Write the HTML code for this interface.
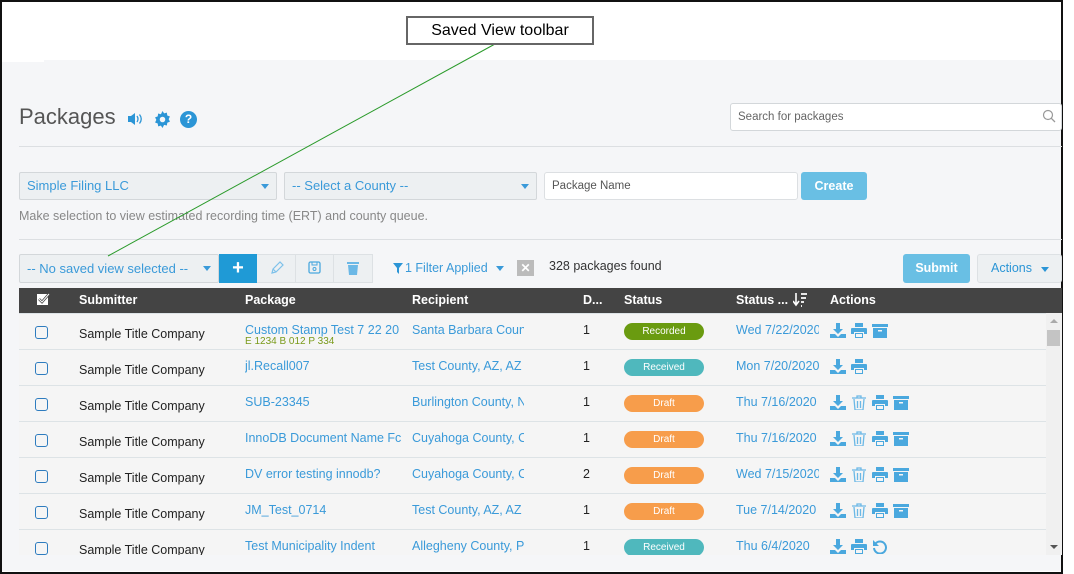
<!DOCTYPE html>
<html><head><style>
*{box-sizing:border-box;margin:0;padding:0}
body{width:1074px;height:574px;background:#fff;position:relative;overflow:hidden;font-family:"Liberation Sans",sans-serif;font-size:12.5px}
.a{position:absolute}
.blue{color:#3a9ad9}
.sel{position:absolute;background:#edf0f2;border:1px solid #d3d7da;border-radius:2px;color:#3a9ad9;font-size:13px;padding-left:7px;line-height:26px}
.car{position:absolute;right:7px;top:11px;width:0;height:0;border-left:4px solid transparent;border-right:4px solid transparent;border-top:5px solid #3a9ad9}
.row{position:absolute;left:19px;width:1027px;height:36px;border-top:1px solid #dde3e6;background:#f5f5f5}
.row span{position:absolute}
.cb{left:16px;top:12px;width:13px;height:13px;border:1.5px solid #2e7cbf;border-radius:3px}
.sub{left:60px;top:13px;color:#222;font-size:12.5px}
.pk{left:226px;top:9px;color:#3a9ad9;font-size:12.5px;width:158px;white-space:nowrap;overflow:hidden}
.rc{left:393px;top:9px;color:#3a9ad9;width:112px;white-space:nowrap;overflow:hidden}
.d{left:564px;top:9px;color:#222}
.pill{left:605px;top:9px;width:80px;height:17px;border-radius:9px;color:#fff;font-size:10px;text-align:center;line-height:17px}
.dt{left:717px;top:9px;color:#3a9ad9;width:83px;white-space:nowrap;overflow:hidden}
.ic{left:811px;top:9px;display:flex;gap:5px}
th{}
.h{position:absolute;top:5px;color:#fff;font-weight:bold;font-size:12.5px}
</style></head><body>
<svg width="0" height="0" style="position:absolute"><defs>
<g id="dl"><path d="M6 0h4v6h3l-5 5-5-5h3z M0 11h5l3 3 3-3h5v4H0z" fill="#4aa8de"/></g>
<g id="pr"><path d="M4 0h8v4H4z M1 5h14a1 1 0 0 1 1 1v5h-3v-2H3v2H0V6a1 1 0 0 1 1-1z M4 10h8v5H4z" fill="#4aa8de"/><rect x="5" y="11" width="6" height="3" fill="#f5f5f5"/></g>
<g id="ar"><rect x="0" y="1" width="16" height="3" fill="#4aa8de"/><rect x="1" y="5" width="14" height="10" fill="#4aa8de"/><rect x="6" y="7" width="4" height="1.5" fill="#f5f5f5"/></g>
<g id="tr"><path d="M1 3h14 M6 3V1h4v2 M3 4l1 11h8l1-11 M6.5 6v7 M9.5 6v7" stroke="#6bb8e6" stroke-width="1.3" fill="none"/></g>
<g id="ud"><path d="M3.5 4.5A6 6 0 1 1 2 9" stroke="#4aa8de" stroke-width="2" fill="none"/><path d="M1 1v6h6z" fill="#4aa8de"/></g>
</defs></svg>
<div class="a" style="left:0;top:0;width:1063px;height:574px;border:2px solid #111;border-right-width:2px"></div>
<div class="a" style="left:2px;top:60px;width:1059px;height:511px;background:#f5f6f8"></div>
<div class="a" style="left:2px;top:58px;width:42px;height:4px;background:#fff"></div>

<div class="a" style="left:19px;top:104px;font-size:22px;color:#555">Packages</div>
<svg class="a" style="left:128px;top:112px" width="16" height="14"><path d="M0 4h3l4-3v12l-4-3H0z" fill="#2b95d6"/><path d="M9 4q2 3 0 6 M11.5 2.5q3.5 4.5 0 9" stroke="#2b95d6" stroke-width="1.3" fill="none"/></svg>
<svg class="a" style="left:154px;top:111px" width="17" height="17" viewBox="0 0 16 16"><path d="M8 0l1.5 2.2 2.6-.7.4 2.7 2.5 1-1.2 2.4 1.2 2.4-2.5 1-.4 2.7-2.6-.7L8 16l-1.5-2.2-2.6.7-.4-2.7-2.5-1L2.2 8.4 1 6l2.5-1 .4-2.7 2.6.7z" fill="#2b95d6"/><circle cx="8" cy="8" r="2.6" fill="#f5f6f8"/></svg>
<div class="a" style="left:180px;top:111px;width:17px;height:17px;border-radius:50%;background:#2b95d6;color:#fff;font-weight:bold;font-size:12px;text-align:center;line-height:17px">?</div>

<div class="a" style="left:730px;top:103px;width:332px;height:28px;border:1px solid #d3d7da;border-radius:3px;background:#fff;color:#666;font-size:11.5px;padding-left:7px;line-height:26px">Search for packages</div>
<svg class="a" style="left:1042px;top:109px" width="14" height="14"><circle cx="6" cy="6" r="4.5" stroke="#999" stroke-width="1.2" fill="none"/><path d="M9.3 9.3L13 13" stroke="#999" stroke-width="1.3"/></svg>
<div class="a" style="left:19px;top:146px;width:1043px;height:1px;background:#dcdfe2"></div>

<div class="sel" style="left:19px;top:172px;width:258px;height:28px">Simple Filing LLC<div class="car"></div></div>
<div class="sel" style="left:284px;top:172px;width:253px;height:28px">-- Select a County --<div class="car"></div></div>
<div class="a" style="left:544px;top:172px;width:254px;height:28px;background:#fff;border:1px solid #dcdfe2;border-radius:3px;color:#555;font-size:11.5px;padding-left:7px;line-height:26px">Package Name</div>
<div class="a" style="left:801px;top:172px;width:66px;height:28px;background:#69bfe4;border-radius:3px;color:#fff;font-weight:bold;font-size:12.5px;text-align:center;line-height:28px">Create</div>
<div class="a" style="left:19px;top:209px;color:#888;font-size:12.5px">Make selection to view estimated recording time (ERT) and county queue.</div>
<div class="a" style="left:19px;top:239px;width:1043px;height:1px;background:#dcdfe2"></div>

<div class="sel" style="left:19px;top:254px;width:200px;height:29px;line-height:27px">-- No saved view selected --<div class="car" style="top:11px"></div></div>
<div class="a" style="left:219px;top:254px;width:38px;height:29px;background:#1f9ad6;color:#fff;font-size:20px;font-weight:bold;text-align:center;line-height:28px">+</div>
<div class="a" style="left:257px;top:254px;width:116px;height:29px;background:#edf0f2;border:1px solid #dde1e4;border-left:none"></div>
<div class="a" style="left:295px;top:255px;width:1px;height:27px;background:#dde1e4"></div>
<div class="a" style="left:333px;top:255px;width:1px;height:27px;background:#dde1e4"></div>
<svg class="a" style="left:270px;top:261px" width="14" height="14"><path d="M2 12l1-4 7-7 3 3-7 7z M3 8l3 3" stroke="#7dc1ea" stroke-width="1.2" fill="none"/></svg>
<svg class="a" style="left:308px;top:261px" width="13" height="13"><rect x="1" y="1" width="11" height="11" rx="1.5" stroke="#4aa8de" stroke-width="1.3" fill="none"/><rect x="4" y="1" width="5" height="3" stroke="#4aa8de" fill="none"/><circle cx="6.5" cy="8" r="1.5" stroke="#4aa8de" fill="none"/></svg>
<svg class="a" style="left:347px;top:261px" width="12" height="14"><rect x="0" y="1" width="12" height="2" fill="#6bb8e6"/><path d="M1 4h10l-1 10H2z" fill="#6bb8e6"/></svg>
<svg class="a" style="left:393px;top:263px" width="10" height="11"><path d="M0 0h10L6 5v6L4 9V5z" fill="#2b95d6"/></svg>
<div class="a" style="left:405px;top:261px;color:#3a9ad9;font-size:12.5px">1 Filter Applied</div>
<div class="car" style="left:496px;top:266px;right:auto"></div>
<div class="a" style="left:517px;top:260px;width:17px;height:16px;background:#bbb;color:#fff;font-weight:bold;font-size:12px;text-align:center;line-height:16px">✕</div>
<div class="a" style="left:549px;top:259px;color:#333;font-size:12.5px">328 packages found</div>
<div class="a" style="left:903px;top:254px;width:67px;height:29px;background:#69bfe4;border-radius:3px;color:#fff;font-weight:bold;text-align:center;line-height:29px">Submit</div>
<div class="a" style="left:977px;top:254px;width:85px;height:29px;background:#edf0f2;border:1px solid #dde1e4;border-radius:3px;color:#2b95d6;padding-left:13px;line-height:27px">Actions<div class="car" style="right:12px;top:12px;border-top-color:#2b95d6"></div></div>

<div class="a" style="left:19px;top:288px;width:1043px;height:25px;background:#444">
<svg class="a" style="left:17px;top:5px" width="14" height="14"><rect x="1" y="1" width="11" height="11" fill="#fff"/><path d="M3 6l3 3 7-8" stroke="#444" stroke-width="2.5" fill="none"/><path d="M3 6l3 3 7-8" stroke="#fff" stroke-width="1" fill="none"/></svg>
<span class="h" style="left:60px">Submitter</span><span class="h" style="left:226px">Package</span><span class="h" style="left:393px">Recipient</span><span class="h" style="left:564px">D...</span><span class="h" style="left:605px">Status</span><span class="h" style="left:717px">Status ...</span>
<svg class="a" style="left:774px;top:5px" width="14" height="14"><path d="M3 0v11 M0 8l3 4 3-4" stroke="#fff" stroke-width="1.6" fill="none"/><path d="M8 1h6 M8 5h5 M8 9h3 M8 13h1" stroke="#fff" stroke-width="1.8"/></svg>
<span class="h" style="left:811px">Actions</span>
</div>

<div class="a" style="left:1046px;top:313px;width:16px;height:242px;background:#f0f0f0"></div>
<div class="a" style="left:1047px;top:330px;width:13px;height:16px;background:#c4c4c4"></div>
<div class="a" style="left:1050px;top:319px;border-left:4px solid transparent;border-right:4px solid transparent;border-bottom:4px solid #aaa;width:0;height:0"></div>
<div class="a" style="left:1050px;top:545px;border-left:4px solid transparent;border-right:4px solid transparent;border-top:4px solid #555;width:0;height:0"></div>

<div class="a" style="left:0;top:313px;width:1046px;height:242px;overflow:hidden">
<div class="row" style="top:0"><span class="cb"></span><span class="sub">Sample Title Company</span><span class="pk" style="top:9px">Custom Stamp Test 7 22 20</span><span style="left:226px;top:22px;color:#7a9a1a;font-size:10px">E 1234 B 012 P 334</span><span class="rc">Santa Barbara Coun</span><span class="d">1</span><span class="pill" style="background:#6a9b10">Recorded</span><span class="dt">Wed 7/22/2020</span><span class="ic"><svg width="16" height="15"><use href="#dl"/></svg><svg width="16" height="15"><use href="#pr"/></svg><svg width="16" height="15"><use href="#ar"/></svg></span></div>
<div class="row" style="top:36px"><span class="cb"></span><span class="sub">Sample Title Company</span><span class="pk">jl.Recall007</span><span class="rc">Test County, AZ, AZ</span><span class="d">1</span><span class="pill" style="background:#4fb8bd">Received</span><span class="dt">Mon 7/20/2020</span><span class="ic"><svg width="16" height="15"><use href="#dl"/></svg><svg width="16" height="15"><use href="#pr"/></svg></span></div>
<div class="row" style="top:72px"><span class="cb"></span><span class="sub">Sample Title Company</span><span class="pk">SUB-23345</span><span class="rc">Burlington County, N</span><span class="d">1</span><span class="pill" style="background:#f79d4b">Draft</span><span class="dt">Thu 7/16/2020</span><span class="ic"><svg width="16" height="15"><use href="#dl"/></svg><svg width="16" height="15"><use href="#tr"/></svg><svg width="16" height="15"><use href="#pr"/></svg><svg width="16" height="15"><use href="#ar"/></svg></span></div>
<div class="row" style="top:108px"><span class="cb"></span><span class="sub">Sample Title Company</span><span class="pk">InnoDB Document Name Fc</span><span class="rc">Cuyahoga County, C</span><span class="d">1</span><span class="pill" style="background:#f79d4b">Draft</span><span class="dt">Thu 7/16/2020</span><span class="ic"><svg width="16" height="15"><use href="#dl"/></svg><svg width="16" height="15"><use href="#tr"/></svg><svg width="16" height="15"><use href="#pr"/></svg><svg width="16" height="15"><use href="#ar"/></svg></span></div>
<div class="row" style="top:144px"><span class="cb"></span><span class="sub">Sample Title Company</span><span class="pk">DV error testing innodb?</span><span class="rc">Cuyahoga County, C</span><span class="d">2</span><span class="pill" style="background:#f79d4b">Draft</span><span class="dt">Wed 7/15/2020</span><span class="ic"><svg width="16" height="15"><use href="#dl"/></svg><svg width="16" height="15"><use href="#tr"/></svg><svg width="16" height="15"><use href="#pr"/></svg><svg width="16" height="15"><use href="#ar"/></svg></span></div>
<div class="row" style="top:180px"><span class="cb"></span><span class="sub">Sample Title Company</span><span class="pk">JM_Test_0714</span><span class="rc">Test County, AZ, AZ</span><span class="d">1</span><span class="pill" style="background:#f79d4b">Draft</span><span class="dt">Tue 7/14/2020</span><span class="ic"><svg width="16" height="15"><use href="#dl"/></svg><svg width="16" height="15"><use href="#tr"/></svg><svg width="16" height="15"><use href="#pr"/></svg><svg width="16" height="15"><use href="#ar"/></svg></span></div>
<div class="row" style="top:216px"><span class="cb"></span><span class="sub">Sample Title Company</span><span class="pk">Test Municipality Indent</span><span class="rc">Allegheny County, P</span><span class="d">1</span><span class="pill" style="background:#4fb8bd">Received</span><span class="dt">Thu 6/4/2020</span><span class="ic"><svg width="16" height="15"><use href="#dl"/></svg><svg width="16" height="15"><use href="#pr"/></svg><svg width="16" height="15"><use href="#ud"/></svg></span></div>
</div>

<svg class="a" style="left:0;top:0" width="1074" height="574"><line x1="495" y1="44" x2="108" y2="256" stroke="#2a9a2a" stroke-width="1"/></svg>
<div class="a" style="left:406px;top:16px;width:188px;height:29px;border:2px solid #666;background:#fff;color:#000;font-size:16px;text-align:center;line-height:25px">Saved View toolbar</div>
</body></html>
